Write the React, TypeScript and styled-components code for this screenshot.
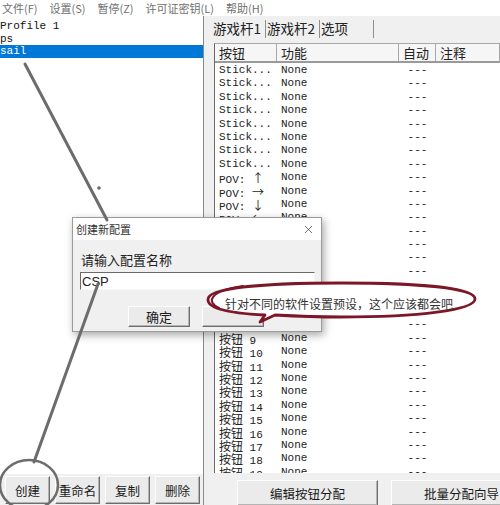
import React from 'react'
import styled, { createGlobalStyle } from 'styled-components'
import { X } from 'lucide-react'

const cjk = '"Noto Sans CJK SC", "Liberation Sans", sans-serif'
const mono = '"Liberation Mono", "DejaVu Sans Mono", "Noto Sans CJK SC", monospace'

const GlobalStyle = createGlobalStyle`
  html, body {
    margin: 0;
    padding: 0;
    background: #fff;
  }
  body {
    width: 500px;
    height: 505px;
    overflow: hidden;
    font-family: ${cjk};
  }
`

const StyledWindow = styled.div`
  position: relative;
  width: 500px;
  height: 505px;
  display: flex;
  flex-direction: column;
  overflow: hidden;
  background: #fff;
`

const StyledMenuBar = styled.div`
  height: 16px;
  display: flex;
  align-items: center;
  gap: 12px;
  padding-left: 2px;
  font-family: ${cjk};
  font-size: 11px;
  line-height: 16px;
  color: #707070;
`

const StyledMain = styled.div`
  flex: 1;
  display: flex;
  min-height: 0;
`

const StyledLeftPane = styled.div`
  width: 203px;
  display: flex;
  flex-direction: column;
  border-right: 1px solid #8a8a8a;
  background: #fff;
`

const StyledProfileList = styled.div`
  flex: 1;
  padding-top: 4px;
`

const StyledProfileItem = styled.div<{ $selected?: boolean }>`
  height: 12.5px;
  line-height: 12.5px;
  font-family: ${mono};
  font-size: 11px;
  white-space: pre;
  color: ${p => (p.$selected ? '#fff' : '#111')};
  background: ${p => (p.$selected ? '#0078d7' : 'transparent')};
`

const StyledLeftButtons = styled.div`
  height: 29px;
  display: flex;
  gap: 5px;
  padding: 2px 0 0 5px;
  background: #f0f0f0;
`

const StyledButton = styled.button<{ $width: number; $height: number; $size?: number }>`
  flex: none;
  width: ${p => p.$width}px;
  height: ${p => p.$height}px;
  padding: 0;
  margin: 0;
  background: #ebebeb;
  border: 1px solid;
  border-color: #fdfdfd #6d6d6d #6d6d6d #fdfdfd;
  box-shadow: inset -1px -1px 0 #b4b4b4;
  font-family: ${cjk};
  font-size: ${p => p.$size ?? 12.5}px;
  color: #1a1a1a;
`

const StyledRightPane = styled.div`
  flex: 1;
  min-width: 0;
  display: flex;
  flex-direction: column;
  background: #f0f0f0;
`

const StyledTabStrip = styled.div`
  height: 25px;
  display: flex;
  align-items: center;
  padding-left: 8px;
`

const StyledTab = styled.div`
  width: 52px;
  height: 18px;
  padding-left: 1px;
  line-height: 17px;
  border-right: 1px solid #8f8f8f;
  font-family: ${cjk};
  font-size: 13.5px;
  color: #222;
`

const StyledTable = styled.div`
  flex: 1;
  min-height: 0;
  margin: 2px 0 0 10px;
  display: flex;
  flex-direction: column;
  border-left: 1px solid #6a6a6a;
  border-top: 1px solid #a8a8a8;
  background: #fff;
  overflow: hidden;
`

const columns = '62px 122px 37px 1fr'

const StyledHeader = styled.div`
  display: grid;
  grid-template-columns: ${columns};
  height: 17px;
  border-bottom: 2px solid #9a9a9a;
  background: #f6f6f6;
`

const StyledHeaderCell = styled.div`
  padding-left: 4px;
  border-right: 1px solid #a8a8a8;
  font-family: ${cjk};
  font-size: 13px;
  line-height: 17px;
  color: #222;
  white-space: nowrap;
`

const StyledBody = styled.div`
  flex: 1;
  overflow: hidden;
  padding-top: 1px;
`

const StyledRow = styled.div`
  display: grid;
  grid-template-columns: ${columns};
  height: 13.4px;
  line-height: 13.4px;
  font-family: ${mono};
  font-size: 11px;
  color: #222;
`

const StyledCell = styled.div<{ $center?: boolean }>`
  padding-left: ${p => (p.$center ? 0 : 4)}px;
  text-align: ${p => (p.$center ? 'center' : 'left')};
  white-space: pre;
  overflow: hidden;
`

const StyledCjk = styled.span`
  font-family: ${cjk};
  font-size: 12px;
`

const StyledBottomButtons = styled.div`
  height: 25px;
  margin-top: 7px;
  display: flex;
  gap: 13px;
  padding-left: 33px;
  overflow: hidden;
`

const StyledDialog = styled.div`
  position: absolute;
  left: 72px;
  top: 217px;
  width: 248px;
  height: 113px;
  display: flex;
  flex-direction: column;
  border: 1px solid #9b9b9b;
  background: #f0f0f0;
  box-shadow: 2px 3px 8px rgba(0, 0, 0, 0.35);
`

const StyledDialogTitle = styled.div`
  height: 22px;
  display: flex;
  align-items: center;
  justify-content: space-between;
  padding: 0 6px 0 3px;
  background: #fff;
  font-family: ${cjk};
  font-size: 11px;
  color: #333;
`

const StyledDialogBody = styled.div`
  flex: 1;
  padding: 10px 0 0 7px;
`

const StyledPrompt = styled.div`
  height: 20px;
  padding-left: 1px;
  line-height: 20px;
  font-family: ${cjk};
  font-size: 13px;
  color: #222;
`

const StyledNameInput = styled.input`
  display: block;
  box-sizing: border-box;
  width: 235px;
  height: 18px;
  margin: 2px 0 0;
  padding: 0 1px;
  border: 1px solid;
  border-color: #6a6a6a #f8f8f8 #f8f8f8 #6a6a6a;
  background: #fff;
  font-family: "Liberation Sans", Arial, sans-serif;
  font-size: 13px;
  color: #222;
  outline: none;
`

const StyledDialogButtons = styled.div`
  display: flex;
  gap: 12px;
  margin-top: 16px;
  padding-left: 48px;
`

const StyledOverlay = styled.svg`
  position: absolute;
  left: 0;
  top: 0;
  pointer-events: none;
`

const StyledCallout = styled.div`
  position: absolute;
  left: 203px;
  top: 280px;
  width: 278px;
  height: 46px;
  display: flex;
  align-items: center;
  justify-content: center;
  padding-right: 6px;
  box-sizing: border-box;
`

const StyledCalloutShape = styled.svg`
  position: absolute;
  left: 0;
  top: 0;
`

const StyledCalloutText = styled.span`
  position: relative;
  font-family: ${cjk};
  font-size: 12px;
  color: #333;
  white-space: nowrap;
`

const menus = ['文件(F)', '设置(S)', '暂停(Z)', '许可证密钥(L)', '帮助(H)']
const profiles = ['Profile 1', 'ps', 'sail']

const rows: { key: string; label: React.ReactNode }[] = [
  ...Array.from({ length: 8 }, (_, i) => ({ key: `s${i}`, label: 'Stick...' })),
  ...['↑', '→', '↓', '←'].map(a => ({
    key: a,
    label: (
      <>
        {'POV: '}
        <StyledCjk>{a}</StyledCjk>
      </>
    ),
  })),
  ...Array.from({ length: 20 }, (_, i) => ({
    key: `b${i}`,
    label: (
      <>
        <StyledCjk>按钮</StyledCjk>
        {` ${i + 1}`}
      </>
    ),
  })),
]

export default function App() {
  return (
    <StyledWindow>
      <GlobalStyle />
      <StyledMenuBar>
        {menus.map(m => (
          <span key={m}>{m}</span>
        ))}
      </StyledMenuBar>
      <StyledMain>
        <StyledLeftPane>
          <StyledProfileList>
            {profiles.map(p => (
              <StyledProfileItem key={p} $selected={p === 'sail'}>
                {p}
              </StyledProfileItem>
            ))}
          </StyledProfileList>
          <StyledLeftButtons>
            {['创建', '重命名', '复制', '删除'].map(b => (
              <StyledButton key={b} $width={45} $height={28}>
                {b}
              </StyledButton>
            ))}
          </StyledLeftButtons>
        </StyledLeftPane>
        <StyledRightPane>
          <StyledTabStrip>
            <StyledTab>游戏杆1</StyledTab>
            <StyledTab>游戏杆2</StyledTab>
            <StyledTab>选项</StyledTab>
          </StyledTabStrip>
          <StyledTable>
            <StyledHeader>
              <StyledHeaderCell>按钮</StyledHeaderCell>
              <StyledHeaderCell>功能</StyledHeaderCell>
              <StyledHeaderCell>自动</StyledHeaderCell>
              <StyledHeaderCell>注释</StyledHeaderCell>
            </StyledHeader>
            <StyledBody>
              {rows.map(r => (
                <StyledRow key={r.key}>
                  <StyledCell>{r.label}</StyledCell>
                  <StyledCell>None</StyledCell>
                  <StyledCell $center>---</StyledCell>
                  <StyledCell />
                </StyledRow>
              ))}
            </StyledBody>
          </StyledTable>
          <StyledBottomButtons>
            <StyledButton $width={141} $height={26}>编辑按钮分配</StyledButton>
            <StyledButton $width={141} $height={26}>批量分配向导</StyledButton>
          </StyledBottomButtons>
        </StyledRightPane>
      </StyledMain>

      <StyledDialog>
        <StyledDialogTitle>
          <span>创建新配置</span>
          <X size={13} strokeWidth={1.2} color="#222" />
        </StyledDialogTitle>
        <StyledDialogBody>
          <StyledPrompt>请输入配置名称</StyledPrompt>
          <StyledNameInput readOnly value="CSP" />
          <StyledDialogButtons>
            <StyledButton $width={62} $height={21} $size={13}>确定</StyledButton>
            <StyledButton $width={62} $height={21} $size={13} />
          </StyledDialogButtons>
        </StyledDialogBody>
      </StyledDialog>

      {/* hand-drawn gray annotations */}
      <StyledOverlay width={500} height={505} viewBox="0 0 500 505">
        <g stroke="#6c6c6c" strokeWidth={3} strokeLinecap="round" fill="none">
          <line x1={25} y1={64} x2={107} y2={220} />
          <line x1={98} y1={284} x2={34} y2={462} />
          <ellipse cx={29} cy={485} rx={29} ry={25} strokeWidth={2.5} />
        </g>
        <circle cx={99} cy={188} r={1.8} fill="#6c6c6c" />
      </StyledOverlay>

      <StyledCallout>
        <StyledCalloutShape width={278} height={46} viewBox="0 0 278 46">
          <path
            d="M62 35 C20 33 4 27 5 19 C6 8 60 3 138 3 C215 3 272 8 272 19 C272 30 215 37 138 37 C110 37 90 36 72 35 L57 42 Z"
            fill="#fff"
            stroke="#7d1728"
            strokeWidth={2.8}
            strokeLinejoin="round"
          />
          <path d="M16 28 C3 22 6 11 40 6" fill="none" stroke="#7d1728" strokeWidth={2} strokeLinecap="round" />
        </StyledCalloutShape>
        <StyledCalloutText>针对不同的软件设置预设，这个应该都会吧</StyledCalloutText>
      </StyledCallout>
    </StyledWindow>
  )
}
